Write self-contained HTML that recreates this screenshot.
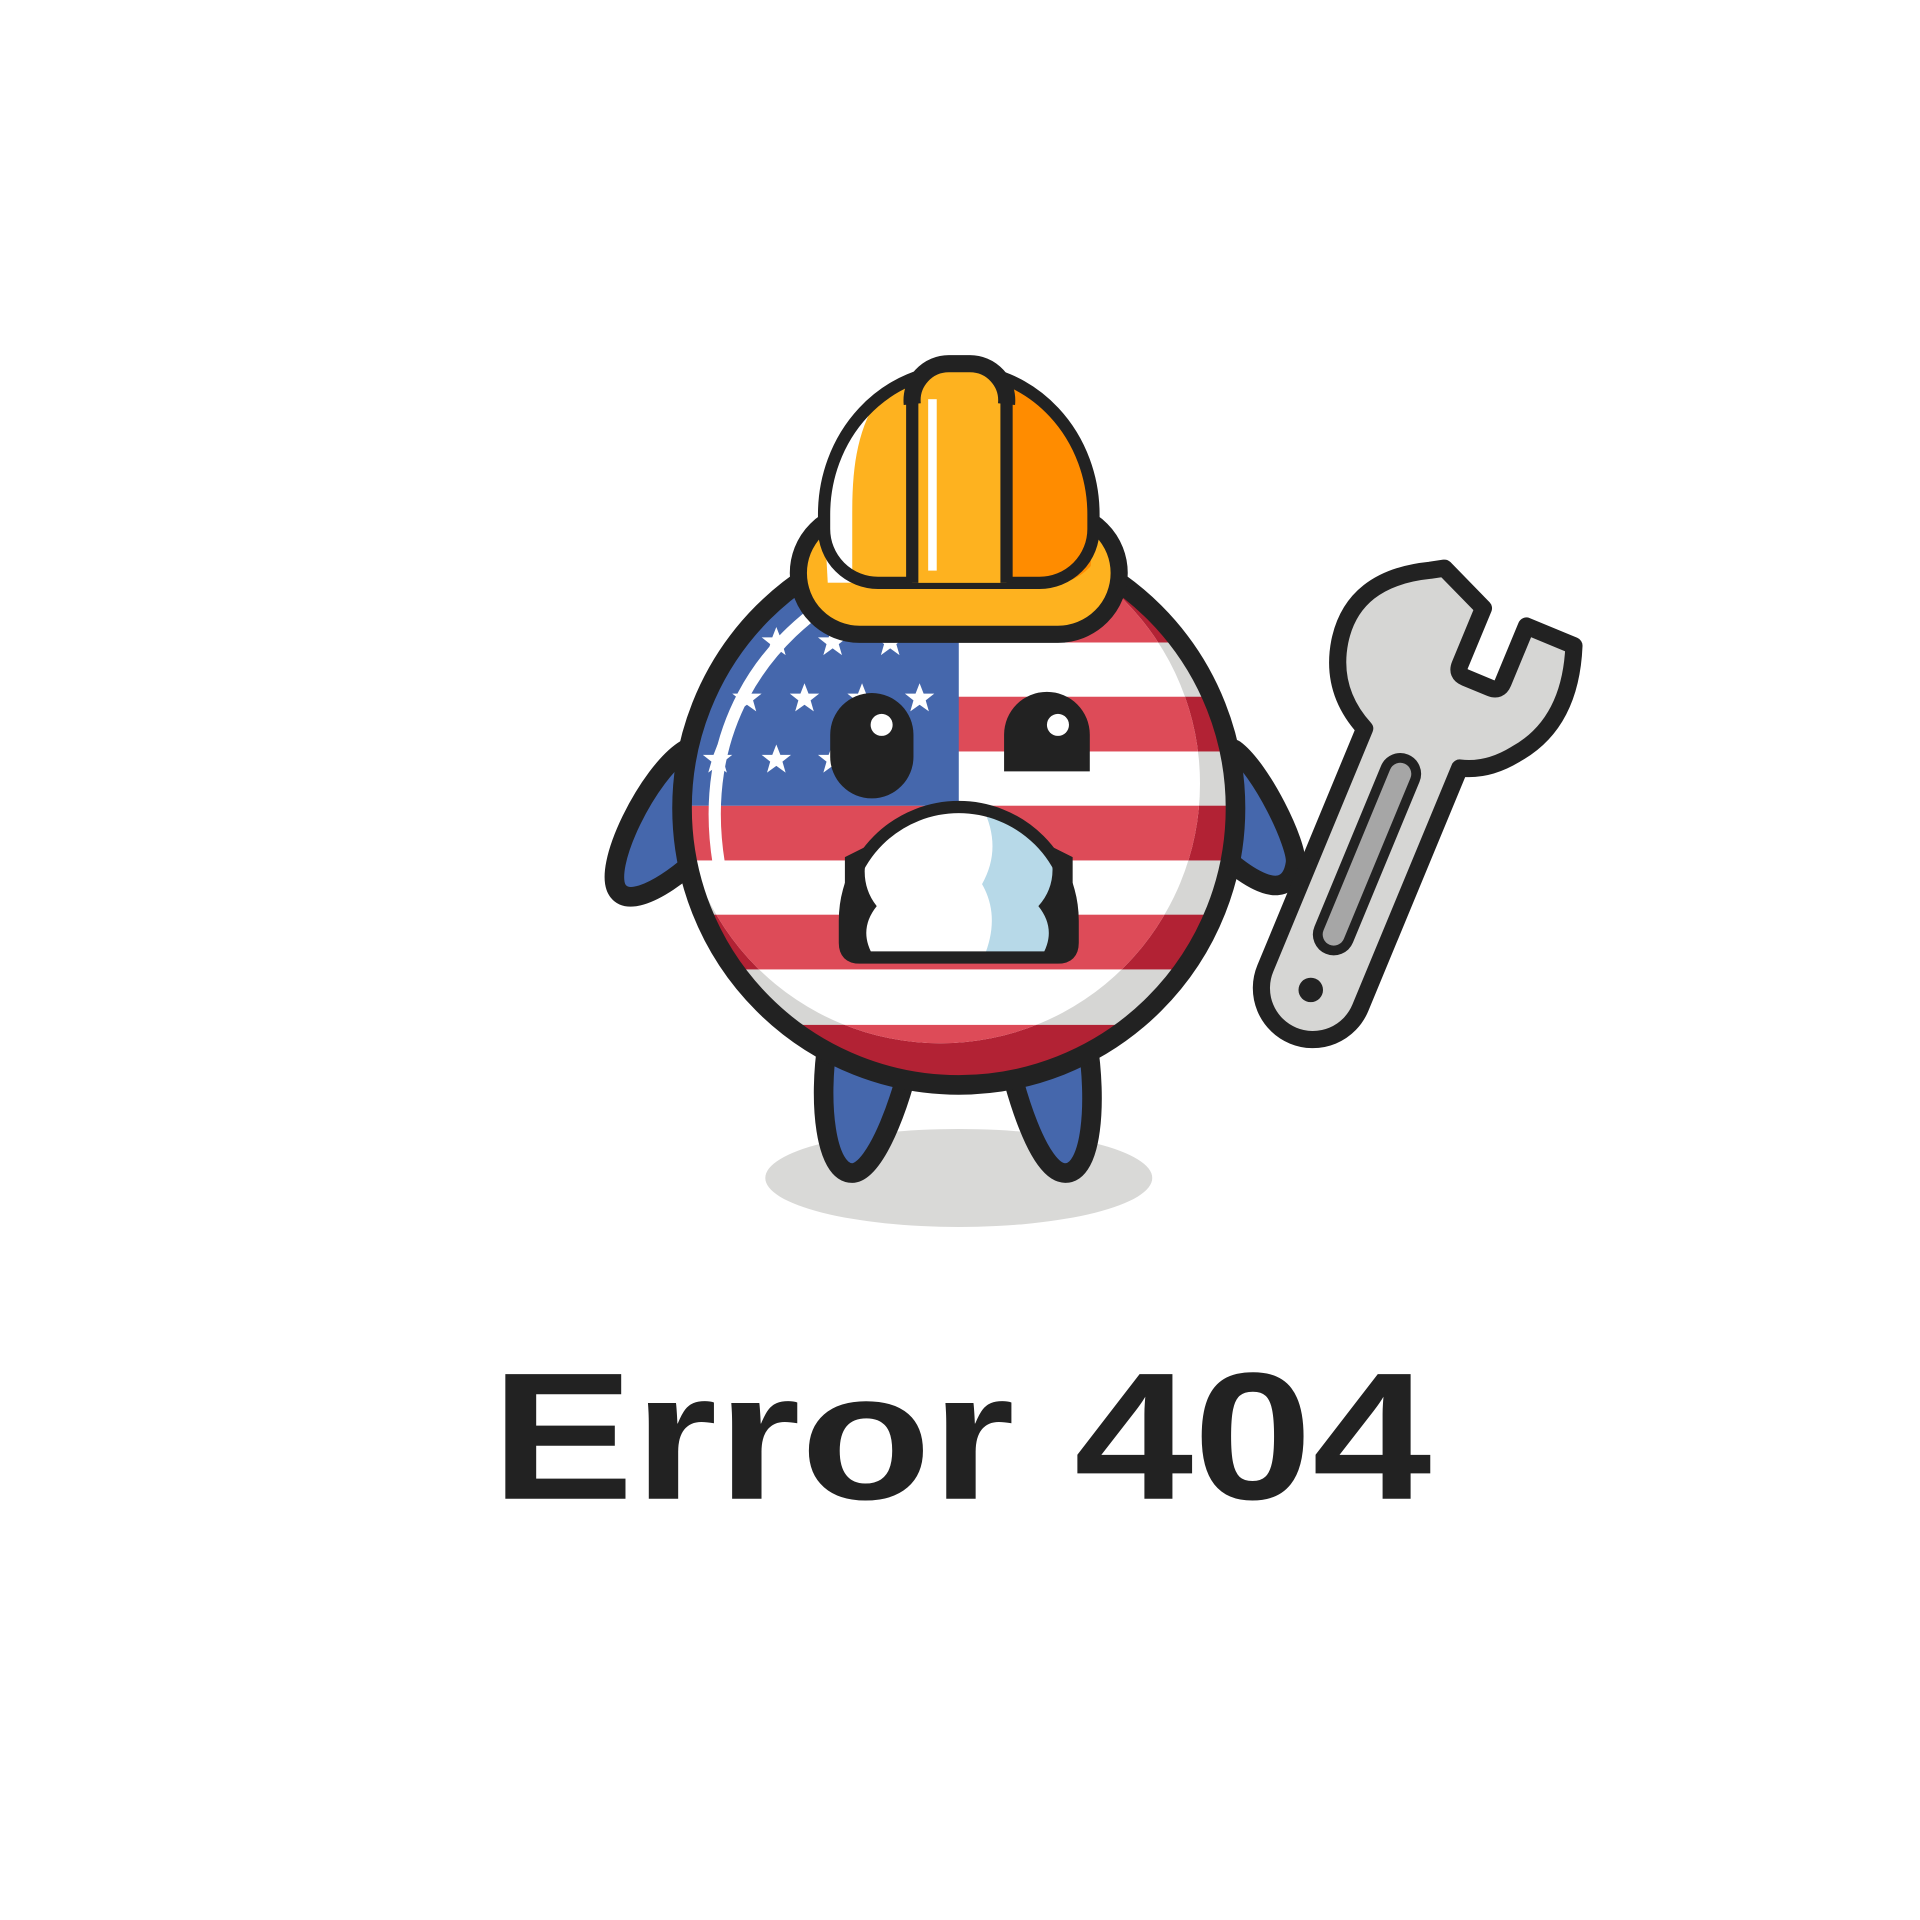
<!DOCTYPE html>
<html><head><meta charset="utf-8"><style>
html,body{margin:0;padding:0;background:#fff;}
svg{display:block;}
</style></head><body>
<svg width="1920" height="1920" viewBox="0 0 1568 1568" xmlns="http://www.w3.org/2000/svg">
<defs>
<clipPath id="body"><circle cx="783" cy="660" r="226"/></clipPath>
<clipPath id="inner"><circle cx="768" cy="640" r="212"/></clipPath>
<clipPath id="mouth"><path d="M690 752 A93 93 0 0 1 876 752 L876 770 Q876 782 864 782 L702 782 Q690 782 690 770 Z"/></clipPath>
<clipPath id="dome"><path d="M673 420 A110 118 0 0 1 893 420 L890 476 L676 476 Z"/></clipPath>
<g id="star"><polygon points="0,-12 3.3,-3.5 12,-3.5 5,2 7.6,11 0,5.5 -7.6,11 -5,2 -12,-3.5 -3.3,-3.5" fill="#fff"/></g>
</defs>
<rect width="1568" height="1568" fill="#fff"/>
<ellipse cx="783" cy="962" rx="158" ry="40" fill="#d9d9d7"/>
<!-- legs -->
<path d="M676 850 C668 900 674 958 696 958 C716 958 740 890 746 850 Z" fill="#4567ac" stroke="#222" stroke-width="16" stroke-linejoin="round"/>
<path d="M820 850 C828 890 848 958 870 958 C892 958 896 900 888 850 Z" fill="#4567ac" stroke="#222" stroke-width="16" stroke-linejoin="round"/>
<!-- arms -->
<path d="M560 612 C530 630 490 710 505 728 C518 744 560 712 575 695 Z" fill="#4567ac" stroke="#222" stroke-width="16" stroke-linejoin="round"/>
<path d="M1008 612 C1030 628 1060 690 1058 705 C1055 725 1040 735 1000 700 Z" fill="#4567ac" stroke="#222" stroke-width="16" stroke-linejoin="round"/>
<!-- body -->
<g clip-path="url(#body)">
<rect x="550" y="430" width="470" height="460" fill="#d6d6d4"/>
<rect x="550" y="480" width="470" height="44.7" fill="#b22234"/>
<rect x="550" y="569" width="470" height="44.7" fill="#b22234"/>
<rect x="550" y="658" width="470" height="44.7" fill="#b22234"/>
<rect x="550" y="747" width="470" height="44.7" fill="#b22234"/>
<rect x="550" y="837" width="470" height="55" fill="#b22234"/>
<g clip-path="url(#inner)">
<rect x="550" y="430" width="470" height="460" fill="#fff"/>
<rect x="550" y="480" width="470" height="44.7" fill="#dd4b58"/>
<rect x="550" y="569" width="470" height="44.7" fill="#dd4b58"/>
<rect x="550" y="658" width="470" height="44.7" fill="#dd4b58"/>
<rect x="550" y="747" width="470" height="44.7" fill="#dd4b58"/>
<rect x="550" y="837" width="470" height="55" fill="#dd4b58"/>
</g>
<rect x="550" y="430" width="233" height="228" fill="#4567ac"/>
<use href="#star" x="680" y="524"/><use href="#star" x="727" y="524"/><use href="#star" x="634" y="524"/>
<use href="#star" x="610" y="570"/><use href="#star" x="657" y="570"/><use href="#star" x="704" y="570"/><use href="#star" x="751" y="570"/>
<use href="#star" x="586" y="620"/><use href="#star" x="634" y="620"/><use href="#star" x="680" y="620"/>
<path d="M700 478 C620 520 570 600 587 705" fill="none" stroke="#fff" stroke-width="10"/>
</g>
<circle cx="783" cy="660" r="226" fill="none" stroke="#222" stroke-width="16"/>
<!-- eyes -->
<path d="M678 600 A34 34 0 0 1 746 600 L746 618 A34 34 0 0 1 678 618 Z" fill="#222"/>
<circle cx="720" cy="592" r="9" fill="#fff"/>
<path d="M820 600 A35 35 0 0 1 890 600 L890 630 L820 630 Z" fill="#222"/>
<circle cx="864" cy="592" r="9" fill="#fff"/>
<!-- mouth -->
<g clip-path="url(#mouth)">
<rect x="680" y="650" width="210" height="140" fill="#fff"/>
<path d="M800 655 Q820 690 802 722 Q818 750 802 785 L880 785 L880 655 Z" fill="#b7d9e8"/>
</g>
<path d="M690 752 A93 93 0 0 1 876 752 L876 770 Q876 782 864 782 L702 782 Q690 782 690 770 Z" fill="none" stroke="#222" stroke-width="10"/>
<path d="M710 690 Q700 720 716 740 Q700 760 714 782 L690 782 L690 700 Z" fill="#222"/>
<path d="M856 690 Q866 720 848 740 Q864 760 850 782 L876 782 L876 700 Z" fill="#222"/>
<!-- hat brim (behind) -->
<rect x="652" y="418" width="262" height="100" rx="50" fill="#feb21f" stroke="#222" stroke-width="14"/>
<!-- dome -->
<path d="M673 420 A110 118 0 0 1 893 420 L893 432 A44 44 0 0 1 849 476 L717 476 A44 44 0 0 1 673 432 Z" fill="#feb21f"/>
<g clip-path="url(#dome)">
<path d="M720 320 C700 350 696 380 696 420 L696 476 L673 476 L673 330 Z" fill="#fff"/>
<path d="M822 300 L902 300 L902 432 A44 44 0 0 1 849 476 L822 476 Z" fill="#ff8c00"/>
</g>
<path d="M673 420 A110 118 0 0 1 893 420 L893 432 A44 44 0 0 1 849 476 L717 476 A44 44 0 0 1 673 432 Z" fill="none" stroke="#222" stroke-width="10"/>
<path d="M745 476 L745 330 A30 30 0 0 1 775 297 L792 297 A30 30 0 0 1 822 330 L822 476" fill="#feb21f" stroke="#222" stroke-width="10"/>
<path d="M745 330 A30 30 0 0 1 775 297 L792 297 A30 30 0 0 1 822 330" fill="none" stroke="#222" stroke-width="14"/>
<rect x="758" y="326" width="7" height="140" fill="#fff"/>
<!-- wrench -->
<g transform="translate(36 6) rotate(22.5 1140 660)">
<path d="M1108 490 L1108 540 Q1108 548 1116 548 L1138 548 Q1146 548 1146 540 L1146 490 L1188 490 Q1210 550 1178 590 Q1162 612 1140 618 L1140 830 A42 42 0 0 1 1056 830 L1056 618 Q1018 600 1010 560 Q1000 508 1056 478 L1066 472 Z" fill="#d6d6d4" stroke="#222" stroke-width="14" stroke-linejoin="round"/>
<rect x="1084" y="628" width="26" height="168" rx="13" fill="#a6a6a6" stroke="#222" stroke-width="8"/>
<circle cx="1097" cy="832" r="10" fill="#222"/>
</g>
<text x="785" y="1224" text-anchor="middle" font-family="Liberation Sans, sans-serif" font-weight="bold" font-size="148" fill="#222" textLength="768" lengthAdjust="spacingAndGlyphs">Error 404</text>
</svg>
</body></html>
